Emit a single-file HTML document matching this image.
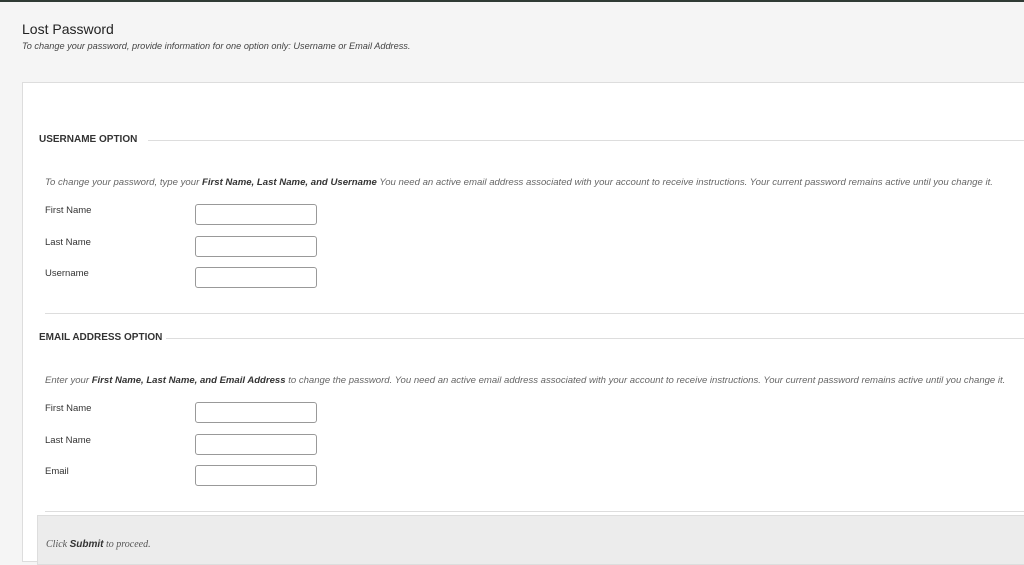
<!DOCTYPE html>
<html><head><meta charset="utf-8"><style>
*{margin:0;padding:0;box-sizing:border-box}
body{width:1024px;height:558px;overflow:hidden;background:#f5f5f5;font-family:"Liberation Sans",sans-serif;color:#333;position:relative}
.a{position:absolute;white-space:nowrap}
.top{left:0;top:0;width:1024px;height:2px;background:#2f3b35}
.panel{left:22px;top:82px;width:1010px;height:480px;background:#fff;border:1px solid #ddd}
.h{font-size:10px;font-weight:bold;color:#333}
.line{height:1px;background:#ddd}
.inst{font-size:9.6px;font-style:italic;color:#666}
.inst b{color:#333}
.lbl{font-size:9.5px;color:#333}
.in{width:122px;height:21px;border:1px solid #999;border-radius:3px;background:#fff}
</style></head><body>
<div class="a top"></div>
<div class="a" style="left:22px;top:21px;font-size:14px;color:#222">Lost Password</div>
<div class="a" style="left:22px;top:41px;font-size:9.2px;font-style:italic;color:#444">To change your password, provide information for one option only: Username or Email Address.</div>
<div class="a panel"></div>

<div class="a h" style="left:39px;top:134px">USERNAME OPTION</div>
<div class="a line" style="left:148px;top:140px;width:876px"></div>
<div class="a inst" style="left:45px;top:177px">To change your password, type your <b>First Name, Last Name, and Username</b> You need an active email address associated with your account to receive instructions. Your current password remains active until you change it.</div>
<div class="a lbl" style="left:45px;top:205px">First Name</div>
<div class="a in" style="left:195px;top:204px"></div>
<div class="a lbl" style="left:45px;top:237px">Last Name</div>
<div class="a in" style="left:195px;top:236px"></div>
<div class="a lbl" style="left:45px;top:268px">Username</div>
<div class="a in" style="left:195px;top:267px"></div>
<div class="a line" style="left:45px;top:313px;width:979px"></div>

<div class="a h" style="left:39px;top:332px">EMAIL ADDRESS OPTION</div>
<div class="a line" style="left:166px;top:338px;width:858px"></div>
<div class="a inst" style="left:45px;top:375px;font-size:9.55px">Enter your <b>First Name, Last Name, and Email Address</b> to change the password. You need an active email address associated with your account to receive instructions. Your current password remains active until you change it.</div>
<div class="a lbl" style="left:45px;top:403px">First Name</div>
<div class="a in" style="left:195px;top:402px"></div>
<div class="a lbl" style="left:45px;top:435px">Last Name</div>
<div class="a in" style="left:195px;top:434px"></div>
<div class="a lbl" style="left:45px;top:466px">Email</div>
<div class="a in" style="left:195px;top:465px"></div>
<div class="a line" style="left:45px;top:511px;width:979px"></div>

<div class="a" style="left:37px;top:515px;width:990px;height:50px;background:#ececec;border:1px solid #ddd"></div>
<div class="a" style="left:46px;top:539px;font-size:10px;font-style:italic;font-family:'Liberation Serif',serif;color:#555">Click <b style="font-family:'Liberation Sans',sans-serif;color:#333">Submit</b> to proceed.</div>
</body></html>
